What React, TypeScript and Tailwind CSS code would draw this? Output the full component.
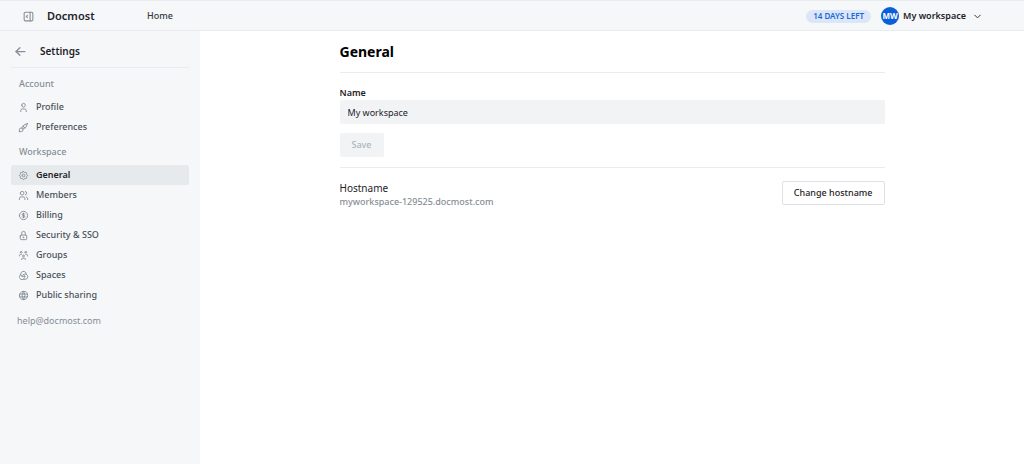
import {
  TbArrowLeft,
  TbBrush,
  TbChevronDown,
  TbCoin,
  TbLayoutSidebarRightExpand,
  TbLock,
  TbSettings,
  TbSpaces,
  TbUser,
  TbUsers,
  TbUsersGroup,
  TbWorld,
} from "react-icons/tb";

const groups = [
  {
    heading: "Account",
    items: [
      { label: "Profile", icon: TbUser },
      { label: "Preferences", icon: TbBrush },
    ],
  },
  {
    heading: "Workspace",
    items: [
      { label: "General", icon: TbSettings, active: true },
      { label: "Members", icon: TbUsers },
      { label: "Billing", icon: TbCoin },
      { label: "Security & SSO", icon: TbLock },
      { label: "Groups", icon: TbUsersGroup },
      { label: "Spaces", icon: TbSpaces },
      { label: "Public sharing", icon: TbWorld },
    ],
  },
];

const Header = () => (
  <header className="flex h-[31px] items-center justify-between border-y border-[#e8ebef] bg-[#f5f7f9] pt-px pr-[41px] pl-[22px]">
    <div className="flex items-center">
      <button type="button" aria-label="Toggle sidebar" className="text-[#868e96]">
        <TbLayoutSidebarRightExpand size={13} />
      </button>
      <a href="#" className="ml-3 w-[100px] text-[11px] font-semibold text-[#1f2328]">
        Docmost
      </a>
      <a href="#" className="text-[9px] font-medium text-[#343a40]">
        Home
      </a>
    </div>
    <div className="flex items-center">
      <span className="flex h-[13px] items-center rounded-full bg-[#dbe7f8] px-[7px] text-[8px] font-semibold text-[#1c66d8]">
        14 DAYS LEFT
      </span>
      <button type="button" className="ml-2.5 flex items-center text-[9px] font-semibold text-[#1f2328]">
        <span className="mr-1 flex size-[18px] items-center justify-center rounded-full bg-[#0b60d8] text-[8px] font-bold text-white">
          MW
        </span>
        My workspace
        <TbChevronDown size={11} className="ml-1.5" />
      </button>
    </div>
  </header>
);

const Sidebar = () => (
  <aside className="w-[200px] shrink-0 bg-[#f5f7f9] px-[11px]">
    <div className="flex h-[37px] items-center border-b border-[#e8ebef] pt-1">
      <a href="#" aria-label="Back" className="ml-[2px] text-[#868e96]">
        <TbArrowLeft size={15} />
      </a>
      <h2 className="ml-3 text-[10px] font-semibold text-[#1f2328]">Settings</h2>
    </div>
    <nav className="pt-2">
      {groups.map((group) => (
        <div key={group.heading} className="mb-[7px]">
          <h3 className="mb-1.5 px-2 text-[9px] leading-[15px] font-medium text-[#868e96]">
            {group.heading}
          </h3>
          {group.items.map(({ label, icon: Icon, active }) => (
            <a
              key={label}
              href="#"
              className={`flex h-5 items-center gap-[7px] rounded-xs px-[7px] text-[9px] ${
                active ? "bg-[#e6eaed] font-semibold text-[#1f2328]" : "font-medium text-[#495057]"
              }`}
            >
              <Icon size={11} className="text-[#868e96]" />
              {label}
            </a>
          ))}
        </div>
      ))}
    </nav>
    <a href="mailto:help@docmost.com" className="ml-1.5 block pt-px text-[9px] leading-[15px] text-[#868e96]">
      help@docmost.com
    </a>
  </aside>
);

const App = () => (
  <div className="flex min-h-screen flex-col bg-white font-['Noto_Sans',sans-serif] text-[#1f2328]">
    <Header />
    <div className="flex grow">
      <Sidebar />
      <main className="grow">
        <div className="mx-auto max-w-[545px]">
          <h1 className="border-b border-[#e9ecef] py-2.5 text-[14px] leading-[21px] font-bold text-black">
            General
          </h1>
          <form className="border-b border-[#e9ecef] pt-3 pb-2.5">
            <label htmlFor="workspace-name" className="block text-[9px] leading-[15px] font-semibold">
              Name
            </label>
            <input
              id="workspace-name"
              type="text"
              defaultValue="My workspace"
              className="block h-6 w-full rounded-xs bg-[#f1f3f5] px-2 text-[9px] outline-none"
            />
            <button
              type="button"
              disabled
              className="mt-[9px] flex h-6 items-center rounded-xs bg-[#f1f3f5] px-3 text-[9px] font-medium text-[#adb5bd]"
            >
              Save
            </button>
          </form>
          <section className="flex items-start justify-between pt-[13px]">
            <div>
              <h2 className="text-[10px] leading-[14px]">Hostname</h2>
              <p className="text-[9px] leading-[14px] font-medium text-[#868e96]">myworkspace-129525.docmost.com</p>
            </div>
            <button
              type="button"
              className="h-6 rounded-xs border border-[#dee2e6] bg-white px-[11px] text-[9px] font-medium"
            >
              Change hostname
            </button>
          </section>
        </div>
      </main>
    </div>
  </div>
);

export default App;
